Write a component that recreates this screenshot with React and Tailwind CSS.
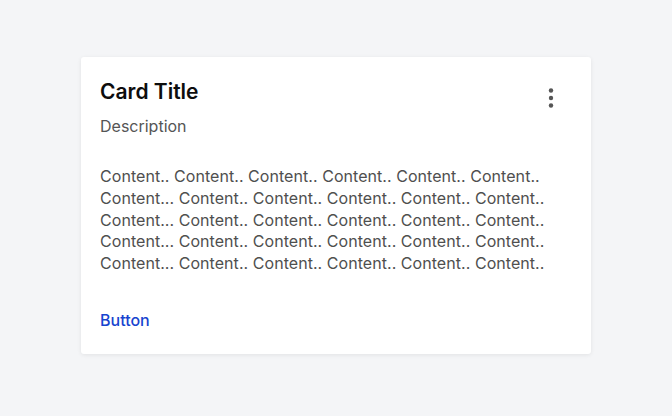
export default function App() {
  const lines = [
    "Content.. Content.. Content.. Content.. Content.. Content..",
    "Content... Content.. Content.. Content.. Content.. Content..",
    "Content... Content.. Content.. Content.. Content.. Content..",
    "Content... Content.. Content.. Content.. Content.. Content..",
    "Content... Content.. Content.. Content.. Content.. Content..",
  ];

  return (
    <div
      className="min-h-screen bg-[#f4f5f7] flex justify-center pt-[57px]"
      style={{ fontFamily: "Inter, 'Noto Sans', sans-serif" }}
    >
      <div className="w-[510px] h-[297px] bg-white rounded-[3px] shadow-[0_1px_4px_rgba(0,0,0,0.08)] px-[19px] pt-[21px] flex flex-col">
        {/* Header */}
        <div className="flex items-start justify-between">
          <div>
            <h1 className="text-[21px] leading-[28px] font-semibold text-[#0d0d0d]">
              Card Title
            </h1>
            <p className="mt-[9px] text-[16px] leading-[22px] text-[#555]">
              Description
            </p>
          </div>
          <button className="mr-[17px] mt-[8px] text-[#555]">
            <svg width="8" height="24" viewBox="0 0 8 24" fill="currentColor">
              <circle cx="4" cy="4.5" r="2.2" />
              <circle cx="4" cy="12" r="2.2" />
              <circle cx="4" cy="19.5" r="2.2" />
            </svg>
          </button>
        </div>

        {/* Content */}
        <div className="mt-[29px] text-[16px] leading-[21.75px] tracking-[0.05px] text-[#4f4f4f]">
          {lines.map((l, i) => (
            <div key={i}>{l}</div>
          ))}
        </div>

        {/* Actions */}
        <div className="mt-[33px]">
          <button className="text-[16px] leading-[22px] font-medium text-[#1744cf]">
            Button
          </button>
        </div>
      </div>
    </div>
  );
}
